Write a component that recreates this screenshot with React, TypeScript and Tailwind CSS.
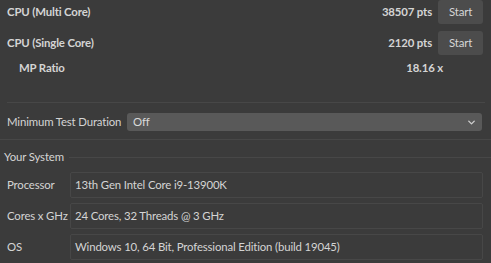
import { ChevronDown } from 'lucide-react';

const font = { fontFamily: 'Lato, "Noto Sans", sans-serif' };

const ScoreRow = ({ label, value }: { label: string; value: string }) => (
  <div className="flex items-center h-[24px] pl-[7px] pr-[8px]">
    <span className="font-bold flex-1">{label}</span>
    <span className="font-bold">{value}</span>
    <button className="ml-[6px] w-[45px] h-[24px] rounded-[3px] bg-[#4c4c4c] text-[#d6d6d6]">
      Start
    </button>
  </div>
);

const InfoRow = ({ label, value }: { label: string; value: string }) => (
  <div className="flex items-center h-[26px] pl-[7px] pr-[8px]">
    <span className="w-[63px] shrink-0">{label}</span>
    <div className="flex-1 h-[26px] flex items-center pl-[4px] border border-[#474747] rounded-[2px]">
      {value}
    </div>
  </div>
);

export default function App() {
  return (
    <div
      className="w-[491px] h-[263px] overflow-hidden bg-[#3b3b3b] text-[11.4px] tracking-[-0.15px] text-[#d4d4d4] whitespace-nowrap"
      style={font}
    >
      <ScoreRow label="CPU (Multi Core)" value="38507 pts" />
      <div className="h-[7px]" />
      <ScoreRow label="CPU (Single Core)" value="2120 pts" />
      <div className="flex items-center h-[20px] mt-[3px] pl-[19px] pr-[48px] font-bold">
        <span className="flex-1">MP Ratio</span>
        <span>18.16 x</span>
      </div>

      <div className="mt-[24px] ml-[7px] mr-[6px] h-px bg-[#474747]" />

      <div className="flex items-center h-[18px] mt-[10px] pl-[7px] pr-[9px]">
        <span className="w-[120px] shrink-0">Minimum Test Duration</span>
        <div className="flex-1 h-[18px] flex items-center pl-[6px] pr-[5px] rounded-[3px] bg-[#595959] text-[#dadada]">
          <span className="flex-1">Off</span>
          <ChevronDown size={11} strokeWidth={3} className="text-[#cfcfcf]" />
        </div>
      </div>

      <div className="mt-[8px] h-px bg-[#474747]" />

      <div className="flex items-center h-[20px] mt-[7px] pl-[4px]">
        <span>Your System</span>
        <div className="flex-1 ml-[5px] h-px bg-[#474747]" />
      </div>

      <div className="mt-[5px] flex flex-col gap-[5px]">
        <InfoRow label="Processor" value="13th Gen Intel Core i9-13900K" />
        <InfoRow label="Cores x GHz" value="24 Cores, 32 Threads @ 3 GHz" />
        <InfoRow label="OS" value="Windows 10, 64 Bit, Professional Edition (build 19045)" />
      </div>
    </div>
  );
}
